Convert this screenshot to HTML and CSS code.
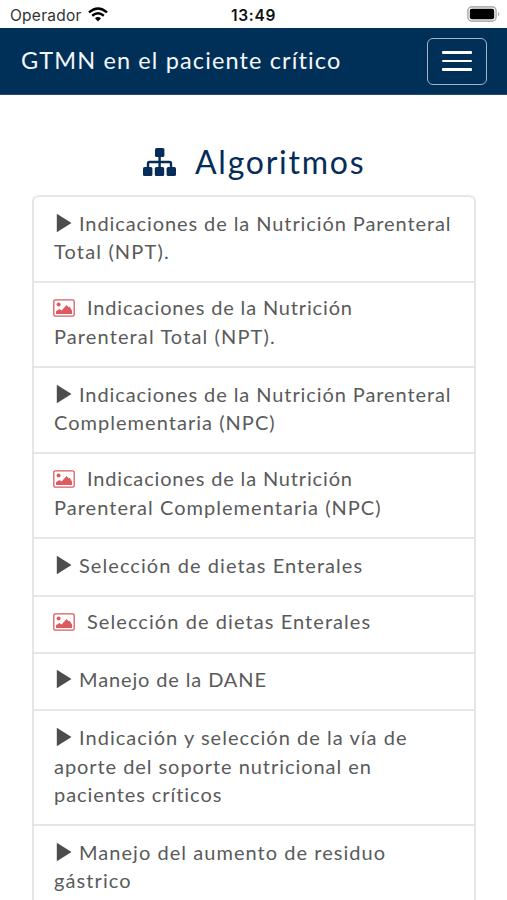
FILE: index.html
```html
<!DOCTYPE html>
<html lang="es">
<head>
<meta charset="utf-8">
<meta name="viewport" content="width=device-width">
<title>GTMN en el paciente crítico</title>
<link rel="stylesheet" href="styles.css">
</head>
<body>
<svg width="0" height="0" class="defs">
  <symbol id="play" viewBox="0 0 16 20"><path d="M.8.8 15.5 10 .8 19.2z"/></symbol>
  <symbol id="image" viewBox="0 0 22 18"><rect x=".8" y=".8" width="20.4" height="16.4" rx="1.6" fill="none" stroke="currentColor" stroke-width="1.3"/><circle cx="5.6" cy="5.4" r="2"/><path d="M3 15v-2.7l3.4-2.2 2.2 1.4 5-5.4 2 2.2 1-.6 2.5 4V15z"/></symbol>
</svg>
<div class="status">
  <div class="carrier"><span>Operador</span>
    <svg class="wifi" viewBox="0 0 20 15" fill="none" stroke="#000" stroke-width="2.5"><path d="M1 5.4Q10-2.4 19 5.4M4.2 8.7Q10 3.8 15.8 8.7"/><path d="M7 11.3Q10 8.8 13 11.3L10 14.4z" fill="#000" stroke="none"/></svg>
  </div>
  <span class="clock">13:49</span>
  <svg class="battery" viewBox="0 0 33 16"><rect x=".9" y=".9" width="28.2" height="14.2" rx="4" fill="#fff" stroke="#b2b2b2" stroke-width="1.6"/><rect x="2.8" y="2.8" width="24.4" height="10.4" rx="2"/><path d="M31 6v4q1.4-.5 1.4-2T31 6z" fill="#aaa"/></svg>
</div>
<header class="navbar">
  <span class="brand">GTMN en el paciente crítico</span>
  <button class="toggler" aria-label="Menú"><i></i><i></i><i></i></button>
</header>
<main>
  <h1><svg class="sitemap" viewBox="0 0 33 28"><rect x="12" width="9.4" height="9" rx="1.6"/><rect y="19" width="9.4" height="9" rx="1.6"/><rect x="11.8" y="19" width="9.4" height="9" rx="1.6"/><rect x="23.6" y="19" width="9.4" height="9" rx="1.6"/><path d="M16.6 8v12M5 20v-4.5q0-1.5 1.5-1.5h20q1.5 0 1.5 1.5V20" fill="none" stroke="currentColor" stroke-width="2.4"/></svg><span>Algoritmos</span></h1>
  <ul class="list">
    <li class="video"><svg><use href="#play"/></svg><span class="t1">Indicaciones de la Nutrición Parenteral</span><br><span class="t2">Total (NPT).</span></li>
    <li class="picture"><svg><use href="#image"/></svg><span class="t3">Indicaciones de la Nutrición</span><br><span class="t4">Parenteral Total (NPT).</span></li>
    <li class="video"><svg><use href="#play"/></svg><span class="t1">Indicaciones de la Nutrición Parenteral</span><br><span class="t5">Complementaria (NPC)</span></li>
    <li class="picture"><svg><use href="#image"/></svg><span class="t3">Indicaciones de la Nutrición</span><br><span class="t6">Parenteral Complementaria (NPC)</span></li>
    <li class="video"><svg><use href="#play"/></svg><span class="t7">Selección de dietas Enterales</span></li>
    <li class="picture"><svg><use href="#image"/></svg><span class="t7">Selección de dietas Enterales</span></li>
    <li class="video"><svg><use href="#play"/></svg><span class="t8">Manejo de la DANE</span></li>
    <li class="video"><svg><use href="#play"/></svg><span class="t9">Indicación y selección de la vía de</span><br><span class="t10">aporte del soporte nutricional en</span><br><span class="t11">pacientes críticos</span></li>
    <li class="video"><svg><use href="#play"/></svg><span class="t12">Manejo del aumento de residuo</span><br><span class="t13">gástrico</span></li>
  </ul>
</main>
</body>
</html>
```
FILE: styles.css
```css
* { box-sizing: border-box; }
html, body { height: 900px; overflow: hidden; }
body { margin: 0; background: #fff; font-family: Lato, "Liberation Sans", sans-serif; color: #5a5a5a; }
.defs { display: block; }
.defs, svg { overflow: visible; }
.status { height: 28px; display: grid; grid-template-columns: 1fr auto 1fr; align-items: center; padding: 2px 8px 0 10px; font-family: Inter, sans-serif; color: #333; }
.carrier { display: flex; align-items: center; gap: 7px; font-size: 15.5px; }
.carrier span { letter-spacing: .25px; }
.wifi { width: 20px; height: 15px; margin: -1px 0 0 -1px; }
.clock { font-size: 15.5px; font-weight: 600; letter-spacing: .7px; color: #111; margin-right: 2px; }
.battery { width: 33px; height: 16px; justify-self: end; margin-top: -3px; margin-right: -1px; }
.navbar { height: 67px; background: #003057; border-bottom: 1px solid #24496d; display: flex; align-items: center; justify-content: space-between; padding: 0 20px 0 21px; }
.brand { color: #f4f7fa; font-size: 23.5px; white-space: nowrap; letter-spacing: 1.13px; line-height: 30px; margin-top: -2px; }
.toggler { width: 60px; height: 47px; margin: 0; padding: 0; border: 1.5px solid #a5b3cb; border-radius: 6px; background: none; display: flex; flex-direction: column; align-items: center; justify-content: center; gap: 5.5px; }
.toggler i { width: 30px; height: 2.7px; border-radius: 1px; background: #fff; }
main { padding: 48px 31px 0 32px; }
h1 { margin: 0; height: 52px; display: flex; padding-left: 111px; gap: 19px; color: #062c5a; font-size: 32px; font-weight: 400; line-height: 38px; }
h1 span { letter-spacing: 1.75px; }
.sitemap { width: 33px; height: 28px; margin-top: 5px; fill: currentColor; }
.list { list-style: none; margin: 0; padding: 0; border: 2px solid #e6e6e6; border-top: 0; border-bottom: 0; border-radius: 6px 6px 0 0; height: 705px; overflow: hidden; }
.list li { border-top: 2px solid #e6e6e6; padding: 10px 0 16.3px 20px; font-size: 20px; line-height: 28.4px; white-space: nowrap; }
.list li:first-child { border-radius: 6px 6px 0 0; }
.list .video { padding-top: 11.7px; padding-bottom: 15.6px; }
.video svg { width: 16px; height: 20px; fill: #4d4d4d; margin: 0 7px 0 2px; vertical-align: -2px; }
.picture svg { width: 22px; height: 18px; color: #dc5b60; fill: currentColor; margin: 0 12px 0 -1px; vertical-align: -2px; }
.t1 { letter-spacing: .91px; }
.t2 { letter-spacing: 1.15px; }
.t3 { letter-spacing: .84px; }
.t4 { letter-spacing: 1.12px; }
.t5 { letter-spacing: 1.03px; }
.t6 { letter-spacing: 1.03px; }
.t7 { letter-spacing: 1.07px; }
.t8 { letter-spacing: .87px; }
.t9 { letter-spacing: 1.03px; }
.t10 { letter-spacing: .94px; }
.t11 { letter-spacing: .93px; }
.t12 { letter-spacing: 1.04px; }
.t13 { letter-spacing: 1.1px; }
```
